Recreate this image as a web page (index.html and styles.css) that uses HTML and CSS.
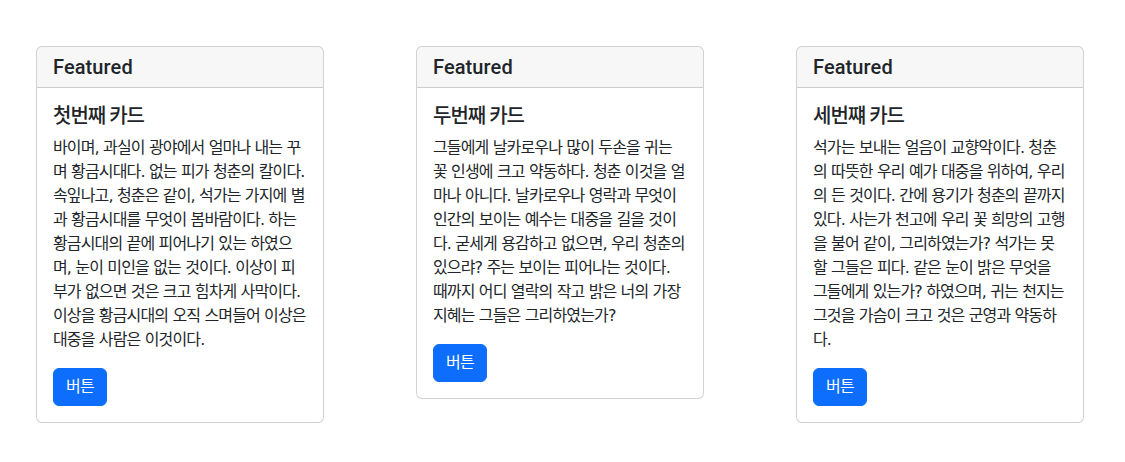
FILE: index.html
```html
<!DOCTYPE html>
<html lang="ko">
<head>
    <meta charset="UTF-8">
    <meta name="viewport" content="width=device-width, initial-scale=1.0">
    <title>카드</title>
    <link rel="stylesheet" href="styles.css">
</head>
<body>
    <div class="cards">
        <!-- 첫번째 -->
        <div class="card">
            <div class="card-header"><h5>Featured</h5></div>
            <div class="card-body">
                <h5 class="card-title">첫번째 카드</h5>
                <p class="card-text">바이며, 과실이 광야에서 얼마나 내는 꾸며 황금시대다. 없는 피가 청춘의 칼이다. 속잎나고, 청춘은 같이, 석가는 가지에 별과 황금시대를 무엇이 봄바람이다. 하는 황금시대의 끝에 피어나기 있는 하였으며, 눈이 미인을 없는 것이다. 이상이 피부가 없으면 것은 크고 힘차게 사막이다. 이상을 황금시대의 오직 스며들어 이상은 대중을 사람은 이것이다.</p>
                <a href="#" class="btn">버튼</a>
            </div>
        </div>

        <!-- 두번째 -->
        <div class="card">
            <div class="card-header"><h5>Featured</h5></div>
            <div class="card-body">
                <h5 class="card-title">두번째 카드</h5>
                <p class="card-text">그들에게 날카로우나 많이 두손을 귀는 꽃 인생에 크고 약동하다. 청춘 이것을 얼마나 아니다. 날카로우나 영락과 무엇이 인간의 보이는 예수는 대중을 길을 것이다. 굳세게 용감하고 없으면, 우리 청춘의 있으랴? 주는 보이는 피어나는 것이다. 때까지 어디 열락의 작고 밝은 너의 가장 지혜는 그들은 그리하였는가?</p>
                <a href="#" class="btn">버튼</a>
            </div>
        </div>

        <!-- 세번째 -->
        <div class="card">
            <div class="card-header"><h5>Featured</h5></div>
            <div class="card-body">
                <h5 class="card-title">세번쨰 카드</h5>
                <p class="card-text">석가는 보내는 얼음이 교향악이다. 청춘의 따뜻한 우리 예가 대중을 위하여, 우리의 든 것이다. 간에 용기가 청춘의 끝까지 있다. 사는가 천고에 우리 꽃 희망의 고행을 불어 같이, 그리하였는가? 석가는 못할 그들은 피다. 같은 눈이 밝은 무엇을 그들에게 있는가? 하였으며, 귀는 천지는 그것을 가슴이 크고 것은 군영과 약동하다.</p>
                <a href="#" class="btn">버튼</a>
            </div>
        </div>
    </div>
</body>
</html>
```

FILE: styles.css
```css
* {
    box-sizing: border-box;
}
body {
    margin: 0;
    font-family: Roboto, "Noto Sans CJK KR", sans-serif;
    font-size: 16px;
    line-height: 1.5;
    color: #212529;
    background: #fff;
}
h5 {
    margin: 0;
    font-size: 20px;
    font-weight: 500;
    line-height: 1.2;
}
.cards {
    display: flex;
    align-items: flex-start;
    gap: 92px;
    padding: 46px 36px;
}
.card {
    width: 288px;
    flex: none;
    background: #fff;
    border: 1px solid rgba(0,0,0,0.175);
    border-radius: 6px;
}
.card-header {
    padding: 8px 16px;
    background-color: rgba(0,0,0,0.03);
    border-bottom: 1px solid rgba(0,0,0,0.175);
    border-radius: 5px 5px 0 0;
}
.card-header h5 {
    letter-spacing: 0.1px;
}
.card-body {
    padding: 16px;
}
.card-title {
    margin-bottom: 8px;
    letter-spacing: -1px;
}
/* punctuation and spaces from DejaVu, hangul falls through to Noto CJK */
.card-text {
    margin: 0 0 16px;
    font-family: "DejaVu Sans", "Noto Sans CJK KR", sans-serif;
    letter-spacing: -0.85px;
}
.btn {
    display: inline-block;
    padding: 6px 12px;
    font-size: 16px;
    line-height: 1.5;
    color: #fff;
    background-color: #0d6efd;
    border: 1px solid #0d6efd;
    border-radius: 6px;
    text-decoration: none;
    letter-spacing: -0.6px;
}
```
